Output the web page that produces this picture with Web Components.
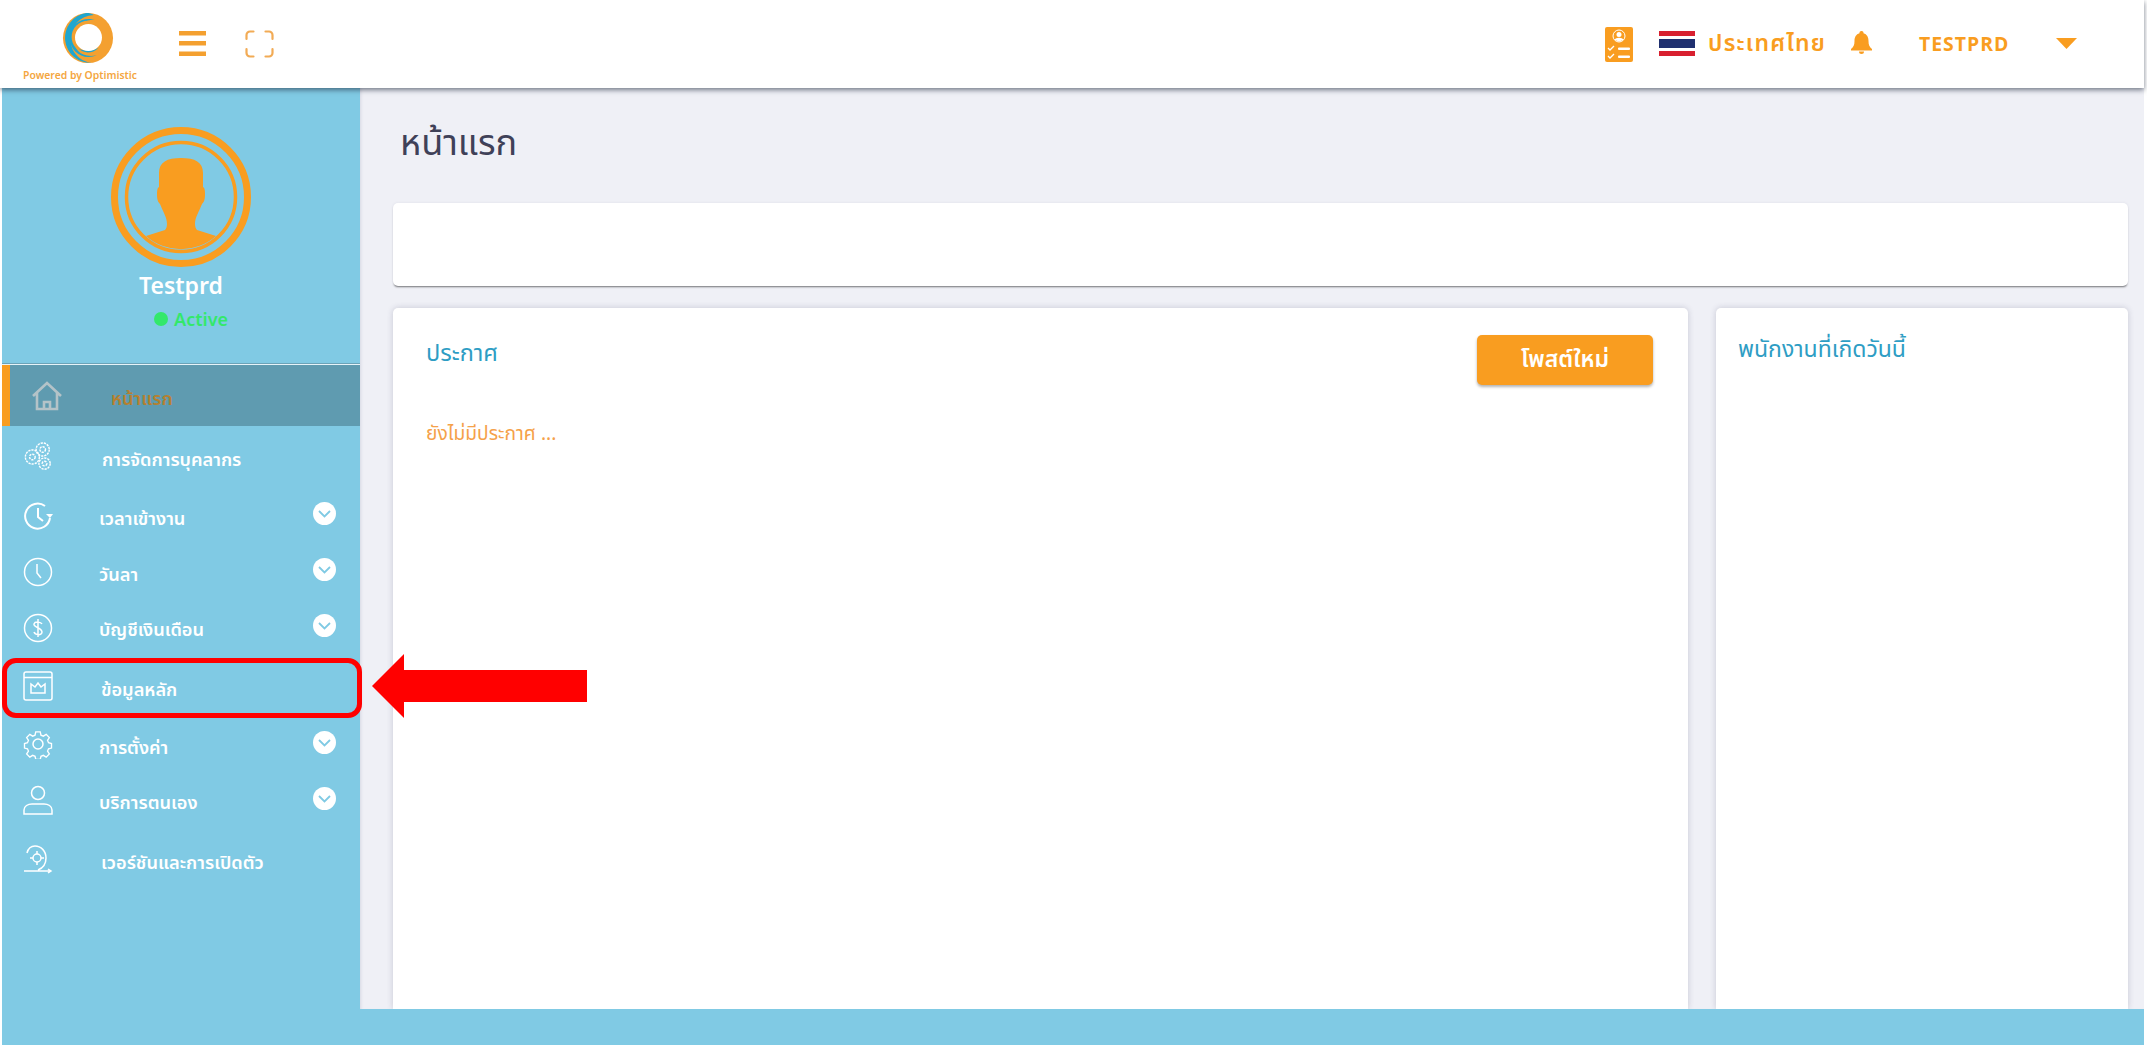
<!DOCTYPE html>
<html lang="th">
<head>
<meta charset="utf-8">
<title>หน้าแรก</title>
<style>
  html, body { margin: 0; height: 100%; overflow: hidden; background: #fff; }
  body { font-family: "Noto Sans Thai", "Noto Sans", "Liberation Sans", sans-serif; }
</style>
</head>
<body>
<hr-app>
  <nav-item slot="menu" active h="61" gap="48" pad="7" label="หน้าแรก">
    <svg slot="icon" viewBox="0 0 32 32" width="32" height="32" fill="none" stroke="#b4c3c8" stroke-width="2.600"><path d="M2 16 16 3l14 13M6 13v16h20V13M13 29v-7h6v7"/></svg>
  </nav-item>
  <nav-item slot="menu" h="61" gap="49" pad="7" label="การจัดการบุคลากร">
    <svg slot="icon" viewBox="0 0 32 32" width="32" height="32" fill="none" stroke="#fff" stroke-width="1.500" stroke-dasharray="2.400 1"><circle cx="10" cy="16" r="7.500"/><circle cx="10" cy="16" r="3"/><circle cx="21" cy="8" r="7"/><circle cx="21" cy="8" r="3"/><circle cx="23" cy="23" r="6"/><circle cx="23" cy="23" r="2.500"/></svg>
  </nav-item>
  <nav-item slot="menu" h="57" gap="46" pad="7" more label="เวลาเข้างาน">
    <svg slot="icon" viewBox="0 0 30 30" width="30" height="30" fill="none" stroke="#fff" stroke-width="2"><path d="M27 17A12.500 12.500 0 1 1 22 5M15 7v9l5 4"/><path d="M23 13l4 4 3-4z" fill="#fff" stroke="none"/></svg>
  </nav-item>
  <nav-item slot="menu" h="55" gap="46" pad="7" more label="วันลา">
    <svg slot="icon" viewBox="0 0 30 30" width="30" height="30" fill="none" stroke="#fff" stroke-width="1.500"><circle cx="15" cy="15" r="13.500"/><path d="M14 7v9l4 5"/></svg>
  </nav-item>
  <nav-item slot="menu" h="57" gap="46" pad="5" more label="บัญชีเงินเดือน">
    <svg slot="icon" viewBox="0 0 30 30" width="30" height="30" fill="none" stroke="#fff" stroke-width="1.500"><circle cx="15" cy="15" r="13.500"/><path d="M19 11c-1-2-7-3-8 0s8 4 8 8-7 3-8 0M15 6v18"/></svg>
  </nav-item>
  <nav-item slot="menu" h="60" gap="48" label="ข้อมูลหลัก">
    <svg slot="icon" viewBox="0 0 30 30" width="30" height="30" fill="none" stroke="#fff" stroke-width="1.500"><rect x="1" y="1" width="28" height="28" rx="2"/><path d="M1 6.500h28M8 22V13l4 3 3-4 3 4 4-3v9z"/></svg>
  </nav-item>
  <nav-item slot="menu" h="56" gap="46" more label="การตั้งค่า">
    <svg slot="icon" viewBox="0 0 30 30" width="30" height="30" fill="none" stroke="#fff" stroke-width="1.500"><circle cx="15" cy="15" r="5"/><path d="M12.500 1.500h5l.8 3.700 2.600 1.100 3.200-2 3.500 3.500-2 3.200 1.100 2.600 3.300.9v5l-3.300.8-1.100 2.600 2 3.200-3.500 3.500-3.200-2-2.600 1.100-.8 3.300h-5l-.8-3.300-2.600-1.100-3.200 2-3.500-3.500 2-3.200-1.100-2.600-3.300-.8v-5l3.300-.9 1.100-2.600-2-3.200 3.500-3.500 3.200 2 2.600-1.100z" transform="translate(1.500 1.500) scale(.9)"/></svg>
  </nav-item>
  <nav-item slot="menu" h="56" gap="46" pad="6" more label="บริการตนเอง">
    <svg slot="icon" viewBox="0 0 30 30" width="30" height="30" fill="none" stroke="#fff" stroke-width="1.500"><circle cx="15" cy="8" r="6.500"/><path d="M1 29v-4c0-4 4-6 8-6h12c4 0 8 2 8 6v4z"/></svg>
  </nav-item>
  <nav-item slot="menu" h="61" gap="48" label="เวอร์ชันและการเปิดตัว">
    <svg slot="icon" viewBox="0 0 30 30" width="30" height="30" fill="none" stroke="#fff" stroke-width="1.500"><path d="M12 2c6 0 11 5 11 12 0 6-3 10-8 12M4 9c1-4 4-7 8-7M1 27h27M25 25l3 2-3 2"/><circle cx="14" cy="14" r="4"/><path d="M14 7v3M14 18v3M7 14h3M18 14h3"/></svg>
  </nav-item>

  <page-title slot="title">หน้าแรก</page-title>
  <info-card slot="banner" style="height:83px"></info-card>
  <announce-card slot="left"></announce-card>
  <birthday-card slot="right"></birthday-card>
</hr-app>

<script>
class TopBar extends HTMLElement {
  connectedCallback() {
    if (this.shadowRoot) return;
    this.attachShadow({ mode: "open" });
    this.shadowRoot.innerHTML = `
      <style>
        :host { display: flex; align-items: flex-start; height: 88px; background: #fff; color: #f99d20;
          box-shadow: 0 2px 5px rgba(30,40,60,.6); position: relative; z-index: 2; }
        .brand { width: 112px; margin: 12px 0 0 24px; display: flex; flex-direction: column; align-items: center; }
        .brand svg { margin-left: 16px; display: block; }
        .brand span { font-size: 10.4px; font-weight: 600; white-space: nowrap; margin-top: 5px; line-height: 14px; color: #f4a640; }
        .burger { margin: 31px 0 0 43px; }
        .full { margin: 30px 0 0 39px; }
        .right { margin-left: auto; display: flex; align-items: flex-start; padding-right: 67px; }
        .doc { margin: 27px 0 0; }
        .flag { margin: 31px 0 0 26px; }
        .country { margin: 26px 0 0 13px; font-size: 23px; line-height: 36px; font-weight: 600; letter-spacing: 1.200px; white-space: nowrap; }
        .bell { margin: 31px 0 0 25px; }
        .user { margin: 32px 0 0 47px; font-size: 19.400px; line-height: 26px; font-weight: 700; letter-spacing: 1px; width: 91px; white-space: nowrap; }
        .caret { margin: 38px 0 0 46px; }
      </style>
      <div class="brand">
        <svg width="52" height="52" viewBox="0 0 54 54">
          <circle cx="27" cy="27" r="26" fill="#f4a030"/>
          <path d="M25 1.100A26 26 0 0 0 31 52.700C20 52 8 42 9 27 10 14 18 4 33 3 30 1.500 28 1 25 1.100z" fill="#1fa6cf"/>
          <path d="M8 27C8 13 20 5 34 8 22 8 12 15 12 27s8 21 24 18C22 51 8 41 8 27z" fill="#1fa6cf"/>
          <circle cx="27" cy="26" r="17" fill="#f4a030"/>
          <path d="M17 38c5 5 14 6 21-1-7 4-15 4-21 1z" fill="#1fa6cf"/>
          <circle cx="27.500" cy="26.500" r="14" fill="#fff"/>
        </svg>
        <span>Powered by Optimistic</span>
      </div>
      <svg class="burger" width="27" height="25" viewBox="0 0 27 25" fill="#f4a030"><rect width="27" height="4.500"/><rect y="10" width="27" height="4.500"/><rect y="20.500" width="27" height="4.500"/></svg>
      <svg class="full" width="29" height="28" viewBox="0 0 29 28" fill="none" stroke="#f2ab55" stroke-width="2.200" stroke-linecap="round"><path d="M1.500 9V5a3.500 3.500 0 0 1 3.500-3.500h3.500M20.500 1.500H24A3.500 3.500 0 0 1 27.500 5v4M27.500 19v4a3.500 3.500 0 0 1-3.500 3.500h-3.500M8.500 26.500H5A3.500 3.500 0 0 1 1.500 23v-4"/></svg>
      <div class="right">
        <svg class="doc" width="28" height="35" viewBox="0 0 28 35">
          <rect width="28" height="35" rx="2" fill="#f99d20"/>
          <circle cx="14" cy="9" r="6" fill="none" stroke="#fff" stroke-width="1"/>
          <circle cx="14" cy="7.500" r="2.500" fill="#fff"/><path d="M9.500 13c1-3 8-3 9 0l-4.500 1.500z" fill="#fff"/>
          <path d="M3 21l2 2 4-4M3 29l2 2 4-4" fill="none" stroke="#fff" stroke-width="1.300"/>
          <rect x="13" y="20.500" width="12" height="2.500" rx="1" fill="#fff"/><rect x="13" y="28.500" width="12" height="2.500" rx="1" fill="#fff"/>
        </svg>
        <svg class="flag" width="36" height="25" viewBox="0 0 36 25">
          <rect width="36" height="25" fill="#fff"/><rect width="36" height="5" fill="#d8202f"/><rect y="20" width="36" height="5" fill="#d8202f"/><rect y="8" width="36" height="9" fill="#20306f"/>
        </svg>
        <span class="country">ประเทศไทย</span>
        <svg class="bell" width="21" height="23" viewBox="0 0 21 23" fill="#f99d20"><path d="M10.500 0a2 2 0 0 1 2 2.300c3.500 1 5 4 5 7.700 0 4 1 6 3.500 8v1.500H0V18c2.500-2 3.500-4 3.500-8 0-3.700 1.500-6.700 5-7.700a2 2 0 0 1 2-2.300zM8 20.500h5a2.500 2.500 0 0 1-5 0z"/></svg>
        <span class="user">TESTPRD</span>
        <svg class="caret" width="21" height="11" viewBox="0 0 21 11" fill="#f99d20"><path d="M0 0h21L10.500 11z"/></svg>
      </div>
    `;
  }
}

class NavItem extends HTMLElement {
  connectedCallback() {
    if (this.shadowRoot) return;
    this.attachShadow({ mode: "open" });
    const h = this.getAttribute("h") || 56;
    const gap = this.getAttribute("gap") || 46;
    const pad = this.getAttribute("pad") || 9;
    const more = this.hasAttribute("more");
    this.shadowRoot.innerHTML = `
      <style>
        :host { display: flex; align-items: center; height: ${h}px; box-sizing: border-box; padding-left: 21px; color: #fff; position: relative; }
        :host([active]) { background: #5f9bb0; border-left: 8px solid #f99d20; padding-left: 21px; color: #b5802f; }
        .icon { width: 30px; height: 32px; display: flex; align-items: center; justify-content: center; flex: none; }
        :host([active]) .icon { width: 32px; }
        .label { margin-left: ${gap}px; padding-top: ${pad}px; font-size: 18.200px; font-weight: 600; white-space: nowrap; }
        .more { margin: 0 24px 4px auto; }
      </style>
      <span class="icon"><slot name="icon"></slot></span>
      <span class="label">${this.getAttribute("label")}</span>
      ${more ? `<svg class="more" width="23" height="23" viewBox="0 0 23 23"><circle cx="11.500" cy="11.500" r="11.500" fill="#fff"/><path d="M6 9l5.500 5.500L17 9" fill="none" stroke="#80cae4" stroke-width="1.800"/></svg>` : ""}
    `;
  }
}

class SideBar extends HTMLElement {
  connectedCallback() {
    if (this.shadowRoot) return;
    this.attachShadow({ mode: "open" });
    this.shadowRoot.innerHTML = `
      <style>
        :host { display: block; background: #80cae4; color: #fff; }
        .profile { height: 276px; box-sizing: border-box; padding-top: 39px; display: flex; flex-direction: column; align-items: center; border-bottom: 1px solid #6ba3b8; box-shadow: 0 1px 0 #e6f4f9; margin-bottom: 1px; }
        .profile svg { display: block; }
        .name { font-size: 23px; font-weight: 600; line-height: 30px; margin: 5px 0 0; }
        .status { display: flex; align-items: center; line-height: 26px; font-size: 18px; font-weight: 600; color: #33e86a; margin: 6px 0 0 20px; }
        .status i { width: 14px; height: 14px; border-radius: 50%; background: #33e86a; margin: 0 6px 4px 0; }
      </style>
      <div class="profile">
        <svg width="140" height="140" viewBox="0 0 140 140">
          <circle cx="70" cy="70" r="66.500" fill="none" stroke="#f99d20" stroke-width="7"/>
          <circle cx="70" cy="70" r="54.500" fill="none" stroke="#f99d20" stroke-width="3.500"/>
          <path d="M48 46C48 35 56 31 70 31S92 35 92 46V60C94 61 94 64 94 68 94 74 92 76 91 77 88 85 84 90 84 97 84 100 85 102 86 103L105 109A53 53 0 0 1 35 109L54 103C55 102 56 100 56 97 56 90 52 85 49 77 48 76 46 74 46 68 46 64 46 61 48 60Z" fill="#f99d20"/>
        </svg>
        <span class="name">Testprd</span>
        <span class="status"><i></i>Active</span>
      </div>
      <slot></slot>
    `;
  }
}

class PageTitle extends HTMLElement {
  connectedCallback() {
    if (this.shadowRoot) return;
    this.attachShadow({ mode: "open" });
    this.shadowRoot.innerHTML = `
      <style>
        :host { display: block; height: 115px; box-sizing: border-box; padding: 33px 0 0 7px; font-size: 36px; line-height: 46px; color: #3f4158; }
      </style>
      <slot></slot>
    `;
  }
}

class InfoCard extends HTMLElement {
  connectedCallback() {
    if (this.shadowRoot) return;
    this.attachShadow({ mode: "open" });
    this.shadowRoot.innerHTML = `
      <style>
        :host { display: block; background: #fff; border-radius: 5px; box-shadow: 0 2px 2px -1px rgba(0,0,0,.5), 0 0 3px rgba(40,40,80,.08); }
      </style>
      <slot></slot>
    `;
  }
}

class AnnounceCard extends HTMLElement {
  connectedCallback() {
    if (this.shadowRoot) return;
    this.attachShadow({ mode: "open" });
    this.shadowRoot.innerHTML = `
      <style>
        :host { display: block; height: 100%; background: #fff; border-radius: 5px 5px 0 0; box-shadow: 0 0 6px rgba(40,40,80,.2); padding: 27px 35px 0 33px; box-sizing: border-box; }
        .head { display: flex; justify-content: space-between; align-items: flex-start; }
        h3 { margin: 1px 0 0; font-size: 23.500px; font-weight: 400; line-height: 36px; color: #2e9dc4; }
        button { width: 176px; height: 50px; border: 0; border-radius: 5px; background: #f99d20; color: #fff; font: 600 23px "Noto Sans Thai", "Noto Sans", "Liberation Sans", sans-serif; box-shadow: 0 2px 3px rgba(0,0,0,.3); padding: 0; }
        p { margin: 36px 0 0; font-size: 19.200px; line-height: 28px; color: #f5a14a; }
      </style>
      <div class="head">
        <h3>ประกาศ</h3>
        <button type="button">โพสต์ใหม่</button>
      </div>
      <p>ยังไม่มีประกาศ ...</p>
    `;
  }
}

class BirthdayCard extends HTMLElement {
  connectedCallback() {
    if (this.shadowRoot) return;
    this.attachShadow({ mode: "open" });
    this.shadowRoot.innerHTML = `
      <style>
        :host { display: block; height: 100%; background: #fff; border-radius: 5px 5px 0 0; box-shadow: 0 0 6px rgba(40,40,80,.2); padding: 22px 22px 0; box-sizing: border-box; }
        h3 { margin: 0; font-size: 23px; font-weight: 400; line-height: 40px; color: #2e9dc4; white-space: nowrap; }
      </style>
      <h3>พนักงานที่เกิดวันนี้</h3>
    `;
  }
}

class HrApp extends HTMLElement {
  connectedCallback() {
    if (this.shadowRoot) return;
    this.attachShadow({ mode: "open" });
    this.shadowRoot.innerHTML = `
      <style>
        :host { display: block; position: relative; height: 1045px; overflow: hidden; }
        .shell { display: grid; grid-template-rows: 88px 921px 36px; height: 1045px; margin: 0 3px 0 0; }
        .mid { display: grid; grid-template-columns: 358px 1fr; margin-left: 2px; min-height: 0; }
        main { background: #eff0f6; padding: 0 16px 0 33px; display: flex; flex-direction: column; overflow: hidden; box-shadow: inset 3px 0 3px -2px rgba(80,90,130,.15); }
        .row { flex: 1; display: grid; grid-template-columns: 1fr 412px; gap: 28px; margin-top: 22px; min-height: 0; }
        .foot { background: #80cae4; margin-left: 2px; }
        .mark { position: absolute; left: 2px; top: 658px; width: 360px; height: 60px; box-sizing: border-box; border: 5px solid #f00; border-radius: 14px; }
        .arrow { position: absolute; left: 372px; top: 654px; }
      </style>
      <div class="shell">
        <top-bar></top-bar>
        <div class="mid">
          <side-bar><slot name="menu"></slot></side-bar>
          <main>
            <slot name="title"></slot>
            <slot name="banner"></slot>
            <div class="row">
              <div><slot name="left"></slot></div>
              <div><slot name="right"></slot></div>
            </div>
          </main>
        </div>
        <div class="foot"></div>
      </div>
      <div class="mark"></div>
      <svg class="arrow" width="215" height="64" viewBox="0 0 215 64"><path d="M0 32 32 0v16h183v32H32v16z" fill="#f00"/></svg>
    `;
  }
}

customElements.define("top-bar", TopBar);
customElements.define("nav-item", NavItem);
customElements.define("side-bar", SideBar);
customElements.define("page-title", PageTitle);
customElements.define("info-card", InfoCard);
customElements.define("announce-card", AnnounceCard);
customElements.define("birthday-card", BirthdayCard);
customElements.define("hr-app", HrApp);
</script>
</body>
</html>
